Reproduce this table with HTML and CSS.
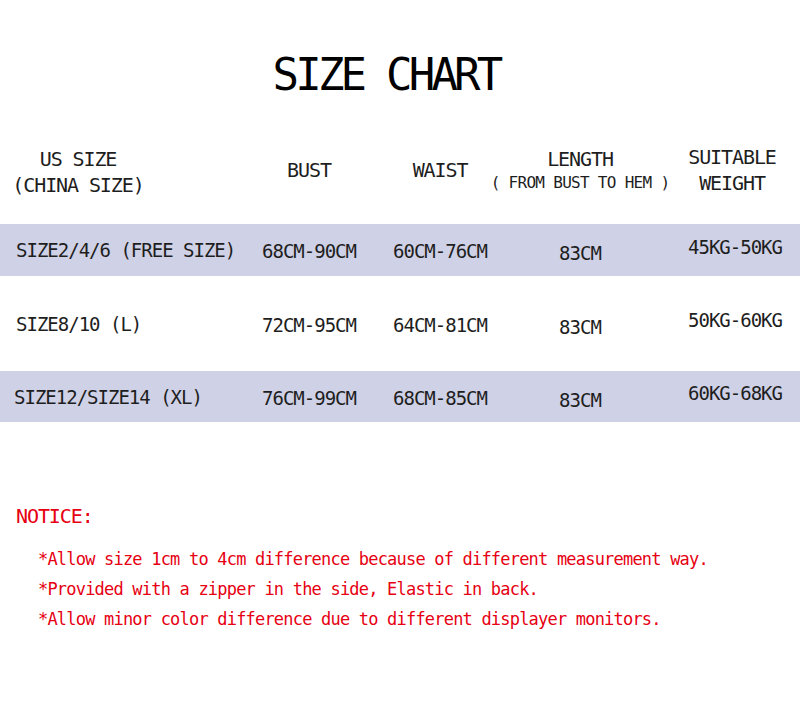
FILE: index.html
```html
<!DOCTYPE html>
<html>
<head>
<meta charset="utf-8">
<link rel="stylesheet" href="styles.css">
</head>
<body>
<div class="page">
  <h1 class="title">SIZE CHART</h1>

  <div class="head grid">
    <div class="hcell hfirst"><div>US SIZE</div><div>(CHINA SIZE)</div></div>
    <div class="hcell">BUST</div>
    <div class="hcell">WAIST</div>
    <div class="hcell"><div>LENGTH</div><div class="hsub">( FROM BUST TO HEM )</div></div>
    <div class="hcell hlast"><div>SUITABLE</div><div>WEIGHT</div></div>
  </div>

  <div class="row grid band r1">
    <div class="cell c1">SIZE2/4/6 (FREE SIZE)</div>
    <div class="cell c2">68CM-90CM</div>
    <div class="cell c3">60CM-76CM</div>
    <div class="cell c4">83CM</div>
    <div class="cell c5">45KG-50KG</div>
  </div>
  <div class="row grid r2">
    <div class="cell c1">SIZE8/10 (L)</div>
    <div class="cell c2">72CM-95CM</div>
    <div class="cell c3">64CM-81CM</div>
    <div class="cell c4">83CM</div>
    <div class="cell c5">50KG-60KG</div>
  </div>
  <div class="row grid band r3">
    <div class="cell c1 c1b">SIZE12/SIZE14 (XL)</div>
    <div class="cell c2">76CM-99CM</div>
    <div class="cell c3">68CM-85CM</div>
    <div class="cell c4">83CM</div>
    <div class="cell c5">60KG-68KG</div>
  </div>

  <div class="notice">
    <div class="notice-title">NOTICE:</div>
    <ul class="notice-list">
      <li>*Allow size 1cm to 4cm difference because of different measurement way.</li>
      <li>*Provided with a zipper in the side, Elastic in back.</li>
      <li>*Allow minor color difference due to different displayer monitors.</li>
    </ul>
  </div>
</div>
</body>
</html>
```

FILE: styles.css
```css
html, body {
  margin: 0;
  padding: 0;
  background: #ffffff;
}

.page {
  width: 800px;
  height: 721px;
  overflow: hidden;
  font-family: "DejaVu Sans Mono", "Liberation Mono", monospace;
  color: #1e1e1e;
}

.title {
  margin: 0;
  padding: 50px 28px 0 0;
  height: 50px;
  text-align: center;
  font-size: 44px;
  line-height: 50px;
  font-weight: normal;
  letter-spacing: -3.8px;
  color: #000000;
}

.grid {
  display: grid;
  grid-template-columns: 250px 118px 144px 136px 152px;
}

.head {
  margin-top: 30px;
  height: 80px;
  margin-bottom: 14px;
  align-items: center;
  font-size: 20px;
  line-height: 26px;
  letter-spacing: -1.1px;
}

.hcell {
  display: flex;
  flex-direction: column;
  align-items: center;
  white-space: nowrap;
}

.hfirst {
  padding-right: 94px;
  padding-top: 4px;
}

.hlast {
  padding-left: 16px;
}

.hsub {
  font-size: 16px;
  line-height: 22px;
  letter-spacing: -0.7px;
}

.row {
  align-items: center;
  font-size: 19px;
  line-height: 24px;
  letter-spacing: -1px;
}

.band {
  background: #cfd1e6;
}

.r1 { height: 52px; }
.r2 { height: 95px; }
.r3 { height: 51px; }

.cell {
  text-align: center;
  white-space: nowrap;
}

.c1 {
  text-align: left;
  padding-left: 16px;
}

.c1b {
  padding-left: 14px;
}

.c2, .c3 {
  padding-top: 2px;
}

.c4 {
  padding-top: 6px;
}

.c5 {
  padding-left: 22px;
  padding-bottom: 7px;
}

.notice {
  margin-top: 82px;
  color: #e60012;
}

.notice-title {
  padding-left: 16px;
  font-size: 20px;
  line-height: 24px;
  letter-spacing: -1.1px;
}

.notice-list {
  list-style: none;
  margin: 16px 0 0 0;
  padding: 0 0 0 38px;
  font-size: 17px;
  line-height: 30px;
  letter-spacing: -0.8px;
  white-space: nowrap;
}
```
